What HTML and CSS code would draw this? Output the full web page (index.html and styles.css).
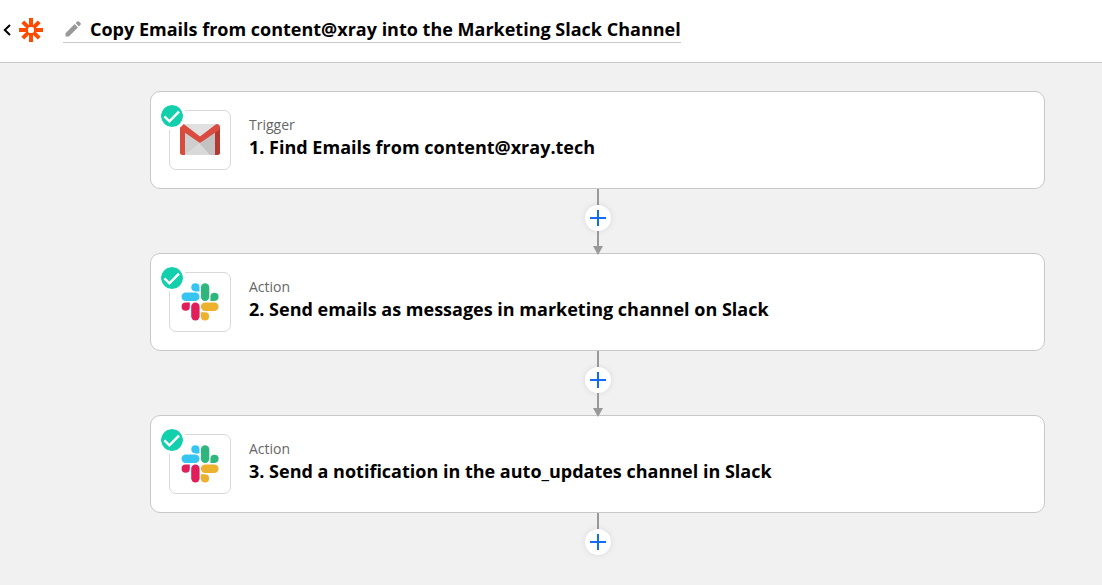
FILE: index.html
```html
<!DOCTYPE html>
<html lang="en">
<head>
<meta charset="utf-8">
<meta name="viewport" content="width=device-width, initial-scale=1">
<title>Zap editor</title>
<link rel="stylesheet" href="styles.css">
</head>
<body>
<svg width="0" height="0" class="sprite" aria-hidden="true">
  <symbol id="check" viewBox="0 0 22 22">
    <circle cx="11" cy="11" r="11" fill="#13d0ac"/>
    <path d="M3.400 11.300l5 5L18 6.700" fill="none" stroke="#fff" stroke-width="2.500"/>
  </symbol>
  <symbol id="plus" viewBox="0 0 16 16">
    <path d="M8 0v16M0 8h16" fill="none" stroke="#136bf5" stroke-width="2"/>
  </symbol>
  <symbol id="slack" viewBox="0 0 38 38">
    <g fill="#36c5f0"><rect x="0.5" y="9.5" width="18" height="8.4" rx="4.2"/><path d="M18.5 8.4h-4.1a4.1 4.1 0 1 1 4.1-4.1z"/></g>
    <g fill="#2eb67d"><rect x="19.9" y="0.2" width="8.4" height="17.7" rx="4.2"/><path d="M29.4 17.9v-4.1a4.1 4.1 0 1 1 4.1 4.1z"/></g>
    <g fill="#ecb22e"><rect x="19.9" y="19.6" width="17.7" height="8.4" rx="4.2"/><path d="M19.9 29.3H24a4.1 4.1 0 1 1-4.1 4.1z"/></g>
    <g fill="#e01e5a"><rect x="10.2" y="19.6" width="8.4" height="17.9" rx="4.2"/><path d="M8.8 19.6v4.1a4.1 4.1 0 1 1-4.1-4.1z"/></g>
  </symbol>
</svg>

<header class="topbar">
  <a class="back" href="#" aria-label="Back">
    <svg width="8" height="12" viewBox="0 0 8 12"><path d="M7 1L1.8 6 7 11" fill="none" stroke="#000" stroke-width="2"/></svg>
  </a>
  <a class="logo" href="#" aria-label="Home">
    <svg width="24" height="24" viewBox="0 0 24 24"><path d="M12 0v24M0 12h24M3.8 3.8l16.4 16.4M20.2 3.8L3.8 20.2" stroke="#ff4a00" stroke-width="4"/><rect x="9" y="9" width="6" height="6" rx="2" fill="#fff"/></svg>
  </a>
  <button class="name" type="button">
    <svg width="16" height="16" viewBox="0 0 16 16" fill="#999"><path d="M0.5 12.2L9.6 3.1l3.3 3.3-9.1 9.1H0.5zM10.6 2.1L12.3.5q.8-.7 1.6 0l1.6 1.6q.7.8 0 1.6l-1.6 1.7z"/></svg>
    <span>Copy Emails from content@xray into the Marketing Slack Channel</span>
  </button>
</header>

<main class="flow">
  <section class="step">
    <div class="app">
      <svg width="40" height="32" viewBox="0 0 40 32" role="img" aria-label="Gmail">
        <path d="M2.5 0h35v31h-35z" fill="#e0e0e0"/>
        <path d="M5 6l15 13 15-13v25H29L20 19 5 31z" fill="#cecece"/>
        <path d="M5 31l15-12 15 12z" fill="#d9d9d9"/>
        <path d="M20 20L35 7v24h-5z" fill="#c2c2c2"/>
        <path d="M0 3h5v28H2.5Q0 31 0 28.500z" fill="#d54b3d"/>
        <path d="M35 3h5v25.500q0 2.500-2.500 2.500H35z" fill="#b63931"/>
        <path d="M2.500 0Q4 0 5 1l15 11.500L35 1q1-1 2.500-1Q40 .5 40 3L39 6 20 19 1 6 0 3Q0 .5 2.500 0z" fill="#d94c3f"/>
      </svg>
      <svg class="badge" width="22" height="22"><use href="#check"/></svg>
    </div>
    <div class="text">
      <p class="kind">Trigger</p>
      <h2 class="title">1. Find Emails from content@xray.tech</h2>
    </div>
  </section>
  <div class="link arrow">
    <button class="add" type="button" aria-label="Add a step"><svg width="16" height="16"><use href="#plus"/></svg></button>
  </div>
  <section class="step">
    <div class="app">
      <svg width="38" height="38" role="img" aria-label="Slack"><use href="#slack"/></svg>
      <svg class="badge" width="22" height="22"><use href="#check"/></svg>
    </div>
    <div class="text">
      <p class="kind">Action</p>
      <h2 class="title">2. Send emails as messages in marketing channel on Slack</h2>
    </div>
  </section>
  <div class="link arrow">
    <button class="add" type="button" aria-label="Add a step"><svg width="16" height="16"><use href="#plus"/></svg></button>
  </div>
  <section class="step">
    <div class="app">
      <svg width="38" height="38" role="img" aria-label="Slack"><use href="#slack"/></svg>
      <svg class="badge" width="22" height="22"><use href="#check"/></svg>
    </div>
    <div class="text">
      <p class="kind">Action</p>
      <h2 class="title">3. Send a notification in the auto_updates channel in Slack</h2>
    </div>
  </section>
  <div class="link">
    <button class="add" type="button" aria-label="Add a step"><svg width="16" height="16"><use href="#plus"/></svg></button>
  </div>
</main>
</body>
</html>
```
FILE: styles.css
```css
* { box-sizing: border-box; }

body {
  margin: 0;
  background: #f1f1f1;
  color: #000;
  font-family: "Open Sans", "Noto Sans", sans-serif;
}

svg { display: block; flex: none; }
.sprite { position: absolute; }

.topbar {
  display: flex;
  align-items: center;
  padding: 16px 3px 19px;
  background: #fff;
  border-bottom: 1px solid #c8c8c8;
}

.logo { margin: 0 20px 0 8px; }

.name {
  display: flex;
  align-items: center;
  gap: 9px;
  padding: 0 0 0 2px;
  border: 0;
  border-bottom: 1px solid #c8c8c8;
  background: none;
  color: inherit;
  font: 700 18px/26px "Open Sans", "Noto Sans", sans-serif;
  text-align: left;
}

.flow { padding: 28px 57px 28px 150px; }

.step {
  display: flex;
  gap: 18px;
  padding: 18px;
  background: #fff;
  border: 1px solid #c8c8c8;
  border-radius: 10px;
}

.app {
  position: relative;
  display: flex;
  flex: none;
  align-items: center;
  justify-content: center;
  width: 62px;
  height: 60px;
  border: 1px solid #d8d8d8;
  border-radius: 7px;
}

.badge {
  position: absolute;
  top: -6px;
  left: -9px;
  border-radius: 50%;
  background: #fff;
  box-shadow: 0 0 0 3px #fff;
}

.text { padding-top: 5px; }

.kind {
  margin: 0;
  color: #666;
  font-size: 14px;
  line-height: 20px;
}

.title {
  margin: 0;
  font-size: 18px;
  font-weight: 700;
  line-height: 24px;
}

.link {
  position: relative;
  display: flex;
  flex-direction: column;
  align-items: center;
}

.link::before {
  content: "";
  width: 2px;
  height: 16px;
  background: #999;
}

.arrow { height: 64px; }

.arrow::after {
  content: "";
  flex: 1;
  width: 2px;
  background: #999;
}

.arrow .add::after {
  content: "";
  position: absolute;
  bottom: -2px;
  left: 50%;
  margin-left: -5px;
  border: 5px solid transparent;
  border-top: 9px solid #999;
  border-bottom: 0;
  z-index: 1;
}

.add {
  display: flex;
  align-items: center;
  justify-content: center;
  width: 26px;
  height: 26px;
  padding: 0;
  border: 0;
  border-radius: 50%;
  background: #fff;
  box-shadow: 0 0 6px rgba(0, 0, 0, 0.1);
}
```
